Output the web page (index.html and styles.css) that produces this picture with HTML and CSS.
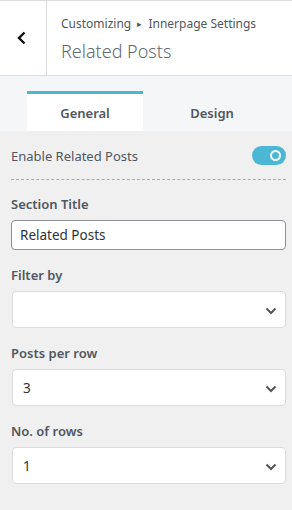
FILE: index.html
```html
<!DOCTYPE html>
<html>
<head>
<meta charset="utf-8">
<link rel="stylesheet" href="styles.css">
</head>
<body>
<div class="header">
  <div class="back">
    <svg width="12" height="14" viewBox="0 0 12 14"><path d="M8.5 1.5 L3 7 L8.5 12.5" fill="none" stroke="#111" stroke-width="2.4"/></svg>
  </div>
  <div class="titles">
    <div class="crumb">Customizing <span class="arrow">▸</span> Innerpage Settings</div>
    <div class="title">Related Posts</div>
  </div>
</div>
<div class="tabs">
  <div class="tab active">General</div>
  <div class="tab">Design</div>
</div>
<div class="content">
  <div class="toggle-row">
    <span class="toggle-label">Enable Related Posts</span>
    <span class="switch"><span class="knob"></span></span>
  </div>
  <div class="sep"></div>
  <div class="field">
    <div class="label">Section Title</div>
    <div class="input">Related Posts</div>
  </div>
  <div class="field">
    <div class="label">Filter by</div>
    <div class="select"><span></span><svg class="chev" width="12" height="8" viewBox="0 0 12 8"><path d="M1.5 1.5 L6 6 L10.5 1.5" fill="none" stroke="#555" stroke-width="2"/></svg></div>
  </div>
  <div class="field">
    <div class="label">Posts per row</div>
    <div class="select"><span>3</span><svg class="chev" width="12" height="8" viewBox="0 0 12 8"><path d="M1.5 1.5 L6 6 L10.5 1.5" fill="none" stroke="#555" stroke-width="2"/></svg></div>
  </div>
  <div class="field">
    <div class="label">No. of rows</div>
    <div class="select"><span>1</span><svg class="chev" width="12" height="8" viewBox="0 0 12 8"><path d="M1.5 1.5 L6 6 L10.5 1.5" fill="none" stroke="#555" stroke-width="2"/></svg></div>
  </div>
</div>
</body>
</html>
```
FILE: styles.css
```css
* { box-sizing: border-box; }
body {
  margin: 0;
  background: #f0f0f1;
  font-family: "Noto Sans", "Open Sans", sans-serif;
  color: #50575e;
}
.header {
  display: flex;
  height: 76px;
  background: #fff;
  border-top: 1px solid #dcdcde;
  border-bottom: 1px solid #dcdcde;
}
.back {
  width: 47px;
  border-right: 1px solid #dcdcde;
  display: flex;
  align-items: center;
  justify-content: center;
  padding-right: 2px;
}
.titles {
  padding: 14px 0 0 14px;
}
.crumb {
  font-size: 12px;
  line-height: 18px;
  color: #50575e;
}
.arrow { font-size: 9px; padding: 0 3px; position: relative; top: -1px; }
.title {
  font-size: 18px;
  line-height: 28px;
  margin-top: 3px;
  color: #646970;
  font-weight: 300;
}
.tabs {
  display: flex;
  background: #f5f6f8;
  padding: 15px 0 0 27px;
}
.tab {
  height: 40px;
  width: 138px;
  border-top: 3px solid transparent;
  display: flex;
  align-items: center;
  justify-content: center;
  font-size: 13px;
  font-weight: 600;
  color: #50575e;
}
.tab.active {
  width: 116px;
  background: #fff;
  border-top-color: #4ab8d4;
}
.content {
  padding: 0 6px 20px 11px;
}
.toggle-row {
  display: flex;
  justify-content: space-between;
  align-items: center;
  height: 48px;
  padding-top: 1px;
}
.toggle-label { font-size: 13px; }
.switch {
  width: 34px;
  height: 19px;
  border-radius: 10px;
  background: #4ab8d4;
  display: flex;
  align-items: center;
  justify-content: flex-end;
  padding-right: 5px;
}
.knob {
  width: 11px;
  height: 11px;
  border-radius: 50%;
  border: 2px solid #fff;
}
.sep {
  border-top: 1px dashed #aaa;
  margin-top: 0;
}
.field { margin-top: 14px; }
.label {
  font-size: 13px;
  font-weight: 600;
  line-height: 20px;
  margin-bottom: 6px;
  color: #50575e;
}
.field + .field { margin-top: 15px; }
.input {
  height: 30px;
  border: 1px solid #8c8f94;
  border-radius: 4px;
  background: #fff;
  font-size: 13.5px;
  padding: 0 8px;
  display: flex;
  align-items: center;
  color: #2c3338;
}
.select {
  height: 37px;
  margin-left: 1px;
  border: 1px solid #dcdcde;
  border-radius: 4px;
  background: #fff;
  display: flex;
  align-items: center;
  justify-content: space-between;
  padding: 0 8px 0 10px;
  font-size: 13.5px;
  color: #2c3338;
}
.chev { margin-top: 2px; }
```
